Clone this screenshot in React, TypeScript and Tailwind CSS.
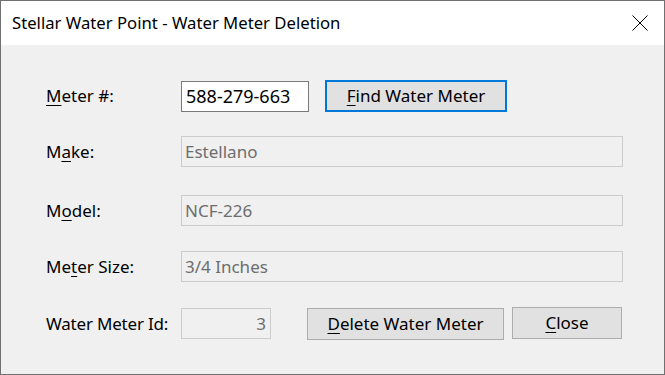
import React from "react";

const U = ({ children }: { children: React.ReactNode }) => (
  <span className="underline decoration-1 underline-offset-[3px]">{children}</span>
);

export default function App() {
  return (
    <div
      className="w-[665px] h-[375px] border border-[#707070] bg-[#f0f0f0] flex flex-col text-black"
      style={{ fontFamily: '"Noto Sans", "Open Sans", sans-serif' }}
    >
      <div className="h-[44px] bg-white flex items-center justify-between pl-[11px] pr-[16px] shrink-0">
        <span className="text-[16.7px] leading-none">Stellar Water Point - Water Meter Deletion</span>
        <svg width="16" height="16" viewBox="0 0 16 16" className="shrink-0">
          <path d="M0.5 0.5 L15.5 15.5 M15.5 0.5 L0.5 15.5" stroke="#000" strokeWidth="1" fill="none" />
        </svg>
      </div>
      <div className="flex flex-col pl-[45px] text-[17px]">
        <div className="flex items-center h-[32px] mt-[35px]">
          <div className="w-[135px]"><U>M</U>eter #:</div>
          <div className="w-[128px] h-[31px] border border-[#7a7a7a] bg-white flex items-center px-[4px] text-[18px]">588-279-663</div>
          <div className="ml-[16px] w-[182px] h-[32px] border-2 border-[#0078d7] bg-[#e1e1e1] flex items-center justify-center"><span><U>F</U>ind Water Meter</span></div>
        </div>
        <div className="flex items-center h-[31px] mt-[24px]">
          <div className="w-[135px]">M<U>a</U>ke:</div>
          <div className="w-[442px] h-[31px] border border-[#cccccc] flex items-center px-[3px] text-[#6d6d6d]">Estellano</div>
        </div>
        <div className="flex items-center h-[31px] mt-[28px]">
          <div className="w-[135px]">M<U>o</U>del:</div>
          <div className="w-[442px] h-[31px] border border-[#cccccc] flex items-center px-[3px] text-[#6d6d6d]">NCF-226</div>
        </div>
        <div className="flex items-center h-[31px] mt-[25px]">
          <div className="w-[135px]">Me<U>t</U>er Size:</div>
          <div className="w-[442px] h-[31px] border border-[#cccccc] flex items-center px-[3px] text-[#6d6d6d]">3/4 Inches</div>
        </div>
        <div className="flex items-center h-[33px] mt-[25px]">
          <div className="w-[135px] tracking-[-0.2px]">Water Meter Id:</div>
          <div className="w-[90px] h-[31px] border border-[#cccccc] flex items-center justify-end px-[4px] text-[#6d6d6d]">3</div>
          <div className="ml-[36px] w-[197px] h-[32px] mt-[1px] border border-[#adadad] bg-[#e1e1e1] flex items-center justify-center"><span><U>D</U>elete Water Meter</span></div>
          <div className="ml-[8px] w-[110px] h-[32px] -mt-[1px] border border-[#adadad] bg-[#e1e1e1] flex items-center justify-center"><span><U>C</U>lose</span></div>
        </div>
      </div>
    </div>
  );
}
